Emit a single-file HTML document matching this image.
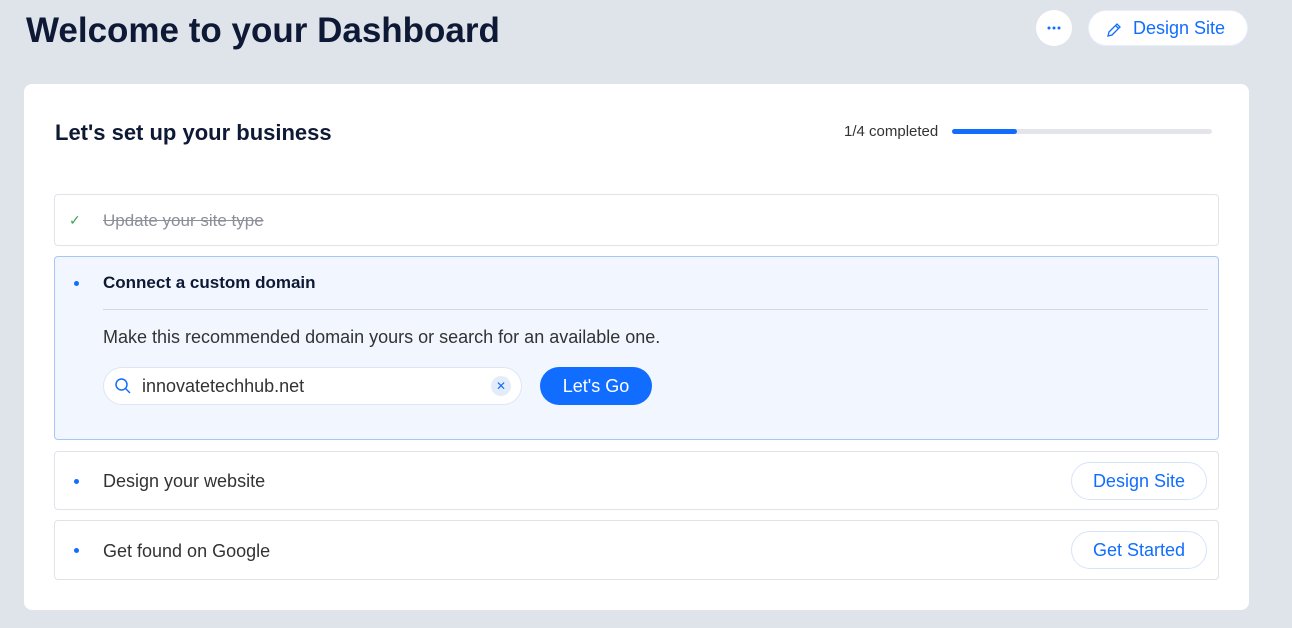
<!DOCTYPE html>
<html><head><style>
*{box-sizing:border-box;margin:0;padding:0}
body{width:1292px;height:628px;background:#dfe3ea;font-family:"Liberation Sans",sans-serif;position:relative;overflow:hidden;color:#162d3d}
.abs{position:absolute}
h1{position:absolute;left:26px;top:11px;font-size:35px;font-weight:bold;color:#0e1a35;letter-spacing:0}
.dots{left:1036px;top:10px;width:36px;height:36px;border-radius:50%;background:#fff}
.ds{left:1088px;top:10px;width:160px;height:36px;border-radius:18px;background:#fff;border:1px solid #e8eefb;color:#116dff;font-size:18px;line-height:34px;padding-left:44px}
.card{left:24px;top:84px;width:1225px;height:526px;background:#fff;border-radius:8px}
.row{position:absolute;left:54px;width:1165px;border:1px solid #dfe3ea;border-radius:4px;background:#fff}
.t{position:absolute;left:48px;font-size:17px}
.dot{position:absolute;left:19px;width:5px;height:5px;border-radius:50%;background:#116dff}
.btn{position:absolute;right:11px;top:10px;height:38px;border:1px solid #d6e4fb;border-radius:19px;color:#116dff;font-size:18px;line-height:36px;padding:0 21px}
</style></head><body>
<h1>Welcome to your Dashboard</h1>
<div class="abs dots"><svg class="abs" style="left:11px;top:16px" width="14" height="4" viewBox="0 0 14 4" fill="#116dff"><circle cx="2" cy="2" r="1.5"/><circle cx="7" cy="2" r="1.5"/><circle cx="12" cy="2" r="1.5"/></svg></div>
<div class="abs ds"><svg class="abs" style="left:17px;top:11px" width="16" height="16" viewBox="0 0 16 16" fill="none" stroke="#116dff" stroke-width="1.3"><path d="M2 14l1-4 8-8 3 3-8 8z M9.5 3.5l3 3"/></svg>Design Site</div>
<div class="abs card"></div>
<div class="abs" style="left:55px;top:120px;font-size:22px;font-weight:bold;color:#0e1a35">Let's set up your business</div>
<div class="abs" style="left:844px;top:123px;font-size:15px;color:#333">1/4 completed</div>
<div class="abs" style="left:952px;top:129px;width:260px;height:5px;border-radius:3px;background:#e4e5ea"></div>
<div class="abs" style="left:952px;top:129px;width:65px;height:5px;border-radius:3px;background:#116dff"></div>

<div class="row" style="top:194px;height:52px">
<div class="abs" style="left:14px;top:17px;color:#3ba55c;font-size:14px">✓</div>
<div class="t" style="top:16px;color:#8a8f98;text-decoration:line-through">Update your site type</div></div>

<div class="row" style="top:256px;height:184px;background:#f2f6fe;border-color:#a9c6f8">
<div class="dot" style="top:24px"></div>
<div class="t" style="top:16px;font-weight:bold;color:#0e1a35">Connect a custom domain</div>
<div class="abs" style="left:48px;right:10px;top:52px;height:1px;background:#d4d9e2"></div>
<div class="t" style="top:70px;color:#333;font-size:18px">Make this recommended domain yours or search for an available one.</div>
<div class="abs" style="left:48px;top:110px;width:419px;height:38px;border:1px solid #dde6f5;border-radius:19px;background:#fff">
<svg class="abs" style="left:10px;top:9px" width="18" height="18" viewBox="0 0 18 18" fill="none" stroke="#116dff" stroke-width="1.5"><circle cx="7.5" cy="7.5" r="5.5"/><path d="M11.5 11.5l4.5 4.5"/></svg>
<div class="abs" style="left:38px;top:8px;font-size:18px;color:#333">innovatetechhub.net</div>
<div class="abs" style="left:387px;top:8px;width:20px;height:20px;border-radius:50%;background:#e4ecfb;color:#116dff;font-size:12px;text-align:center;line-height:20px">✕</div></div>
<div class="abs" style="left:485px;top:110px;width:112px;height:38px;border-radius:19px;background:#116dff;color:#fff;font-size:18px;text-align:center;line-height:38px">Let's Go</div>
</div>

<div class="row" style="top:451px;height:59px"><div class="dot" style="top:27px"></div><div class="t" style="top:19px;color:#333;font-size:18px">Design your website</div><div class="btn">Design Site</div></div>
<div class="row" style="top:520px;height:60px"><div class="dot" style="top:27px"></div><div class="t" style="top:20px;color:#333;font-size:18px">Get found on Google</div><div class="btn">Get Started</div></div>
</body></html>
